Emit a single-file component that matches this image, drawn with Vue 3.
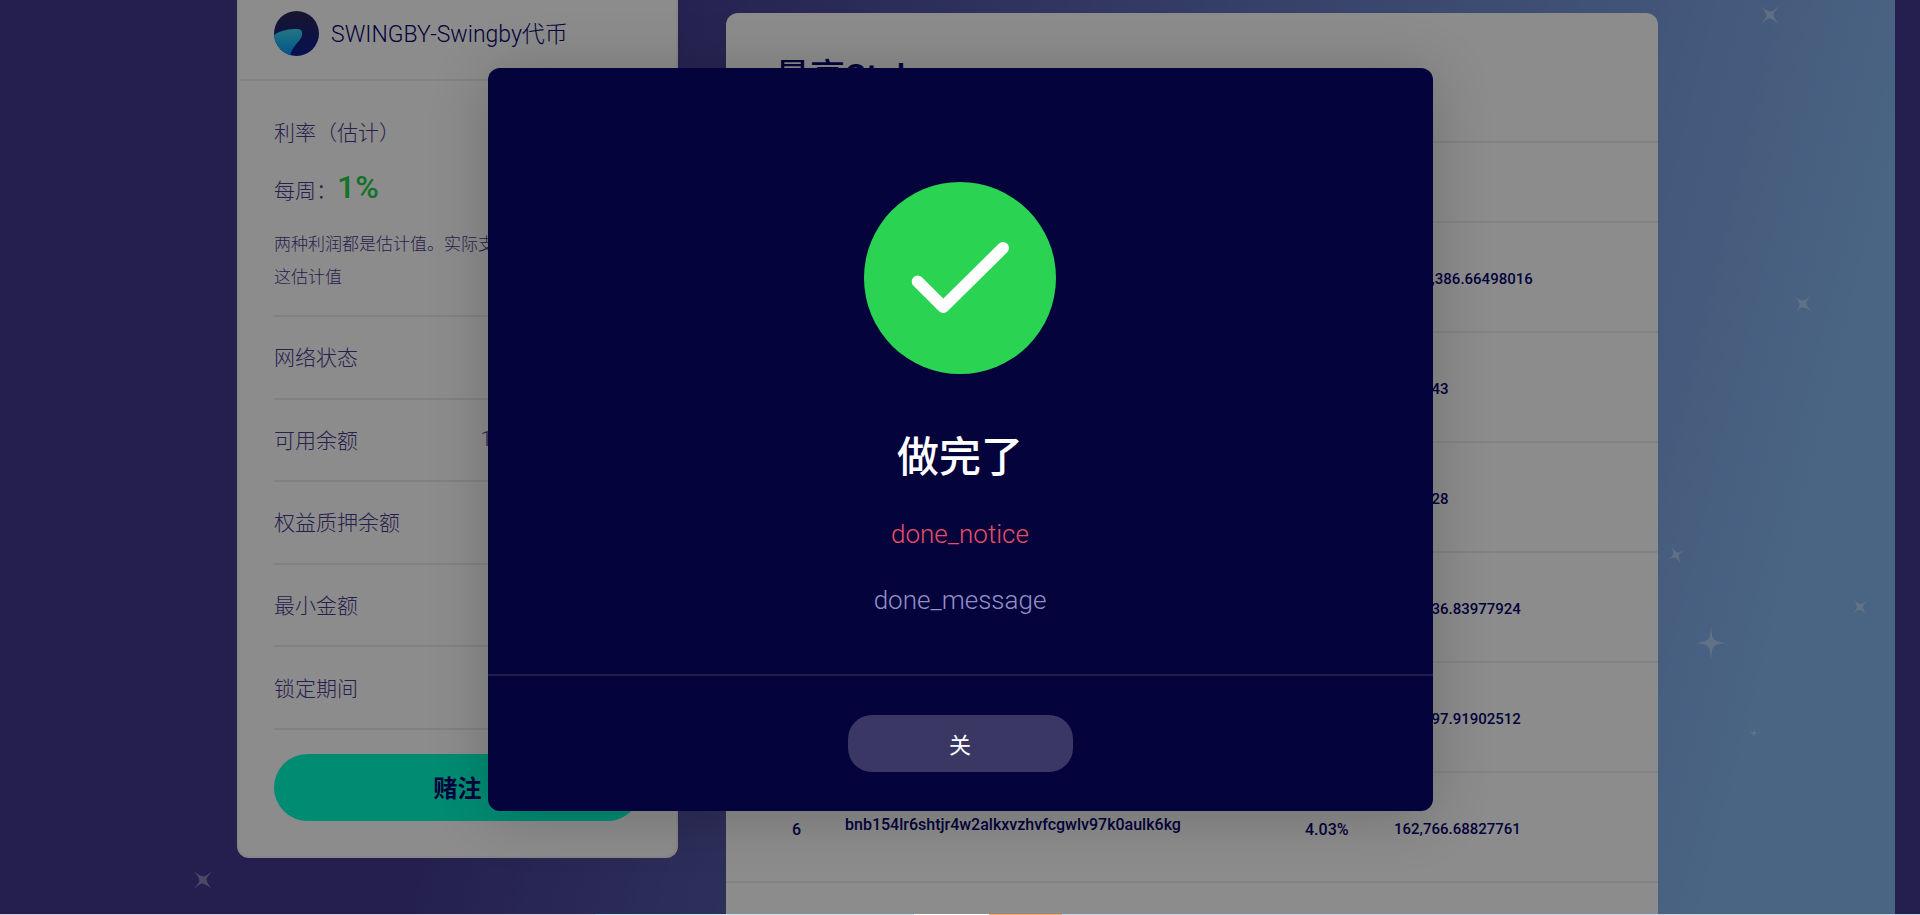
<template>
  <div class="page">
    <main class="stage">
      <div class="sky">
        <svg v-for="(star, i) in stars" :key="i" class="star" viewBox="-10 -10 20 20" preserveAspectRatio="none"
          :style="{ left: star.x + 'px', top: star.y + 'px', width: star.w + 'px', height: star.h + 'px', rotate: star.turn + 'deg' }">
          <path d="M0-10C.6-4 1-2.6 2.2-2C3.6-1 5-.6 10 0C5 .6 3.6 1 2.2 2C1 2.6 .6 4 0 10C-.6 4-1 2.6-2.2 2C-3.6 1-5 .6-10 0C-5-.6-3.6-1-2.2-2C-1-2.6-.6-4 0-10Z"
            fill="#fff" />
        </svg>

        <div class="columns">
          <section class="card stake-card">
            <header class="token">
              <svg class="token-logo" viewBox="0 0 45 45" aria-hidden="true">
                <defs>
                  <linearGradient id="night" x1="0" y1="0" x2="0" y2="1">
                    <stop offset="0" stop-color="#2c2653" />
                    <stop offset="1" stop-color="#0b2096" />
                  </linearGradient>
                  <linearGradient id="wave" x1="0" y1="0" x2="0" y2="1">
                    <stop offset="0" stop-color="#3fd6ee" />
                    <stop offset="1" stop-color="#0099ff" />
                  </linearGradient>
                  <clipPath id="disc"><circle cx="22.5" cy="22.5" r="22.5" /></clipPath>
                </defs>
                <g clip-path="url(#disc)">
                  <rect width="45" height="45" fill="url(#night)" />
                  <path d="M0 24C7 19 15 18 23 18C29 18 29 23 27 27C24 32 18 36 16 45H0Z" fill="url(#wave)" />
                </g>
              </svg>
              <span>SWINGBY-Swingby代币</span>
            </header>

            <div class="stake-body">
              <div class="rate">
                <p class="label">利率（估计）</p>
                <p class="label weekly">每周：<strong>1%</strong></p>
                <p class="hint">两种利润都是估计值。实际支付可能高于或低于这估计值</p>
              </div>
              <ul class="facts">
                <li v-for="fact in facts" :key="fact.label">
                  <span>{{ fact.label }}</span>
                  <span>{{ fact.value }}</span>
                </li>
              </ul>
              <button type="button" class="stake-button">赌注</button>
            </div>
          </section>

          <section class="card top-card">
            <h2>最高Stakers</h2>
            <table>
              <thead>
                <tr>
                  <th class="rank"></th>
                  <th class="address"></th>
                  <th class="share"></th>
                  <th></th>
                </tr>
              </thead>
              <tbody>
                <tr v-for="row in stakers" :key="row.rank">
                  <td class="rank">{{ row.rank }}</td>
                  <td class="address"><a v-if="row.address" href="#">{{ row.address }}</a></td>
                  <td class="share">{{ row.share }}</td>
                  <td class="amount">{{ row.amount }}</td>
                </tr>
              </tbody>
            </table>
            <div class="more"></div>
          </section>
        </div>
      </div>

      <div v-if="open" class="overlay">
        <div class="modal" role="dialog" aria-modal="true" aria-labelledby="done-title">
          <div class="modal-body">
            <svg class="check" viewBox="0 0 192 192" aria-hidden="true">
              <circle cx="96" cy="96" r="96" fill="#2ad352" />
              <path d="M53.7 99.5L79.3 125L139 66" fill="none" stroke="#fff" stroke-width="12" stroke-linecap="round"
                stroke-linejoin="round" />
            </svg>
            <h1 id="done-title">做完了</h1>
            <p class="notice">done_notice</p>
            <p class="message">done_message</p>
          </div>
          <footer class="modal-footer">
            <button type="button" class="close-button" @click="open = false">关</button>
          </footer>
        </div>
      </div>
    </main>
    <div class="edge"></div>
  </div>
</template>

<script setup>
import { ref } from 'vue'

const open = ref(true)

const facts = [
  { label: '网络状态', value: '' },
  { label: '可用余额', value: '15,000.00000000' },
  { label: '权益质押余额', value: '' },
  { label: '最小金额', value: '' },
  { label: '锁定期间', value: '' },
]

const stakers = [
  { rank: 1, amount: '1,229,386.66498016' },
  { rank: 2, amount: '310,243' },
  { rank: 3, amount: '250,028' },
  { rank: 4, amount: '210,936.83977924' },
  { rank: 5, amount: '181,397.91902512' },
  { rank: 6, address: 'bnb154lr6shtjr4w2alkxvzhvfcgwlv97k0aulk6kg', share: '4.03%', amount: '162,766.68827761' },
]

// centre of each star, in px from the top left of the sky
const stars = [
  { x: 203, y: 880, w: 25, h: 25, turn: 45 },
  { x: 1770, y: 15, w: 25, h: 25, turn: 45 },
  { x: 1803, y: 304, w: 23, h: 23, turn: 42 },
  { x: 1676, y: 555, w: 20, h: 20, turn: 60 },
  { x: 1860, y: 607, w: 21, h: 21, turn: 48 },
  { x: 1711, y: 643, w: 30, h: 34, turn: 0 },
  { x: 1754, y: 733, w: 10, h: 10, turn: 10 },
]
</script>

<style>
body {
  margin: 0;
  overflow: hidden;
}
</style>

<style scoped>
.page {
  display: flex;
  flex-direction: column;
  height: 100vh;
  font-family: Roboto, "Noto Sans CJK SC", sans-serif;
  font-weight: 300;
  color: #07056d;
}

.page * {
  box-sizing: border-box;
}

.stage {
  position: relative;
  flex: 1;
  min-height: 0;
  overflow: hidden;
  padding-right: 25px;
  background: #433a90;
}

.sky {
  position: relative;
  height: 100%;
  background: linear-gradient(104deg, #433a90 30%, #87b6f0 91%);
}

.star {
  position: absolute;
  translate: -50% -50%;
  opacity: .38;
}

.columns {
  position: relative;
  display: grid;
  grid-template-columns: 441px 1fr;
  gap: 48px;
  align-items: start;
  max-width: 1421px;
  margin: 0 auto;
}

.card {
  background: #fff;
  border-radius: 12px;
}

.stake-card {
  border: 2px solid #f4f4f4;
  border-top: none;
  border-radius: 0 0 12px 12px;
}

.token {
  display: flex;
  align-items: center;
  gap: 12px;
  height: 81px;
  padding: 0 35px 12px;
  border-bottom: 2px solid #f0f0f0;
  font-size: 24px;
}

.token span {
  font-size: 23px;
  padding-bottom: 4px;
}

.token-logo {
  width: 45px;
  height: 45px;
}

.stake-body {
  padding: 0 35px 35px;
}

.rate {
  padding: 32px 0 21px;
  border-bottom: 2px solid #ebebeb;
  color: #4a3a8c;
}

.rate p {
  margin: 0;
}

.label {
  font-size: 21px;
  line-height: 40px;
}

.rate .weekly {
  margin: 14px 0 17px;
}

.weekly strong {
  font-size: 32px;
  font-weight: 500;
  color: #1fd04a;
}

.hint {
  font-size: 17px;
  line-height: 33px;
}

.facts {
  display: flex;
  flex-direction: column;
  min-height: 413px;
  margin: 0 0 24px;
  padding: 0;
  list-style: none;
  font-size: 21px;
  color: #4a3a8c;
}

.facts li {
  display: flex;
  flex: 1;
  align-items: center;
  justify-content: space-between;
  padding-bottom: 2px;
  border-bottom: 2px solid #ebebeb;
}

.stake-button {
  display: block;
  width: 100%;
  height: 67px;
  padding: 0 0 2px;
  border: none;
  border-radius: 34px;
  background: #00ffd1;
  color: #07056d;
  font: bold 24px Roboto, "Noto Sans CJK SC", sans-serif;
}

.top-card {
  margin-top: 13px;
  overflow: hidden;
}

.top-card h2 {
  margin: 0;
  padding: 39px 49px 37px;
  border-bottom: 2px solid #ebebeb;
  font-size: 35px;
  font-weight: 500;
  line-height: 52px;
}

table {
  width: 100%;
  border-spacing: 0;
  table-layout: fixed;
  font-size: 16px;
  font-weight: 500;
}

th {
  height: 80px;
  padding: 0;
  border-bottom: 2px solid #efefef;
}

td {
  height: 110px;
  padding: 4px 0 0;
  border-bottom: 2px solid #efefef;
}

.rank {
  width: 119px;
  padding-left: 22px;
  text-align: center;
}

.address {
  width: 460px;
}

td.address {
  padding: 0 0 6px;
}

.address a {
  color: inherit;
  text-decoration: none;
}

.share {
  width: 89px;
}

.amount {
  font-size: 15px;
}

.more {
  height: 110px;
}

.overlay {
  position: absolute;
  inset: 0;
  padding: 68px 20px;
  background: rgba(0, 0, 0, .45);
}

.modal {
  max-width: 945px;
  margin: 0 auto;
  border-radius: 12px;
  background: #04033c;
  box-shadow: 0 4px 60px rgba(0, 0, 0, .2);
  text-align: center;
}

.modal-body {
  padding: 114px 40px 54px;
}

.check {
  display: block;
  width: 192px;
  height: 192px;
  margin: 0 auto;
}

.modal-body h1 {
  margin: 52px 0 24px;
  font-size: 42px;
  font-weight: 500;
  line-height: 64px;
  color: #fff;
}

.modal-body p {
  margin: 0;
  font-size: 26px;
  line-height: 40px;
}

.modal-body .notice {
  margin-bottom: 26px;
  color: #ea4e64;
}

.message {
  color: #9390c8;
}

.modal-footer {
  padding: 39px 40px;
  border-top: 2px solid #211d4c;
}

.close-button {
  width: 225px;
  height: 57px;
  padding: 0 0 2px;
  border: none;
  border-radius: 24px;
  background: #3b3764;
  color: #fff;
  font: 400 22px Roboto, "Noto Sans CJK SC", sans-serif;
}

.edge {
  height: 1px;
  background: linear-gradient(90deg, #d5d0dc 31%, #cfe3f0 31% 47.6%, #fff 47.6% 51.5%, #f0a868 51.5% 55.3%, #cbd6e4 55.3%);
}
</style>
